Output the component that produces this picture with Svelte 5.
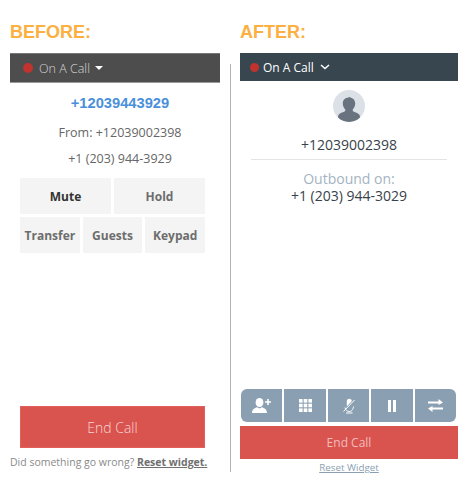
<script lang="ts">
	const rowOne = [
		{ label: 'Mute', active: true },
		{ label: 'Hold', active: false }
	];
	const rowTwo = ['Transfer', 'Guests', 'Keypad'];
	const dots = [0, 1, 2].flatMap((y) => [0, 1, 2].map((x) => ({ x: x * 4.5, y: y * 4.5 })));
</script>

<div class="page">
	<!-- old widget -->
	<section class="before">
		<h2>BEFORE:</h2>
		<div class="bar old-bar">
			<span class="led"></span>
			<span>On A Call</span>
			<span class="caret"></span>
		</div>
		<div class="dialed">+12039443929</div>
		<div class="meta from">From: +12039002398</div>
		<div class="meta line">+1 (203) 944-3929</div>
		<div class="grid">
			<div class="row">
				{#each rowOne as b}
					<div class="cell" class:active={b.active}>{b.label}</div>
				{/each}
			</div>
			<div class="row">
				{#each rowTwo as label}
					<div class="cell">{label}</div>
				{/each}
			</div>
		</div>
		<div class="old-end">End Call</div>
		<div class="old-reset">Did something go wrong? <b>Reset widget.</b></div>
	</section>

	<div class="rule"></div>

	<!-- new widget -->
	<section class="after">
		<h2>AFTER:</h2>
		<div class="bar new-bar">
			<span class="led"></span>
			<span>On A Call</span>
			<svg class="chev" width="10" height="6" viewBox="0 0 10 6">
				<path d="M1 1l4 3.600L9 1" fill="none" stroke="#fff" stroke-width="1.500" />
			</svg>
		</div>
		<div class="avatar">
			<svg width="32" height="32" viewBox="0 0 32 32">
				<circle cx="16" cy="16" r="16" fill="#dbe1e7" />
				<path
					d="M15.500 7.500c-3.300.2-5.700 2.500-5.700 6 0 2.500 1 4.500 2.400 5.800v1.700c-1 1.300-5.300 1.700-6.700 4-.4.700-.5 1.700-.5 2.600A16 16 0 0 0 27 27.600c0-.9-.1-1.900-.5-2.600-1.400-2.300-5.700-2.700-6.700-4v-1.700c1.400-1.300 2.400-3.300 2.400-5.800 0-3.300-2.300-5.500-5-5.900l-.9-.9z"
					fill="#68737f"
				/>
			</svg>
		</div>
		<div class="caller">+12039002398</div>
		<div class="out-label">Outbound on:</div>
		<div class="out-num">+1 (203) 944-3029</div>

		<div class="actions">
			<div class="act">
				<svg width="19" height="15" viewBox="0 0 19 15" fill="#fff">
					<ellipse cx="7.500" cy="4.500" rx="3.900" ry="4.500" />
					<path d="M0 15c0-3.600 2.500-5 5.200-5.700l2.300 1.200 2.300-1.200c2.700.7 5.200 2.100 5.200 5.700z" />
					<path d="M13 3.200h2.200V1h1.600v2.200H19v1.600h-2.200V7h-1.600V4.800H13z" />
				</svg>
			</div>
			<div class="act">
				<svg width="13" height="13" viewBox="0 0 12.500 12.500" fill="#fff">
					{#each dots as d}
						<rect x={d.x} y={d.y} width="3.500" height="3.500" />
					{/each}
				</svg>
			</div>
			<div class="act">
				<svg width="14" height="16" viewBox="0 0 14 16" fill="none" stroke="#fff">
					<path d="M4.800 8.500V3.200a2.500 2.500 0 0 1 5 0v.6L5.500 9.500z" fill="#fff" stroke="none" />
					<path d="M1.500 13.500L12.500 2" stroke="#8a9fb1" stroke-width="2.400" />
					<path d="M1.500 13.500L12.500 2" stroke-width="1" />
					<path d="M3 9.500c.3 2.700 2.300 4 4.300 4s3.800-1.300 4.200-5M4 15h6.500" stroke-width="1" />
				</svg>
			</div>
			<div class="act">
				<svg width="10" height="12" viewBox="0 0 10 12" fill="#fff">
					<rect x="1" y="0" width="3" height="12" />
					<rect x="6" y="0" width="3" height="12" />
				</svg>
			</div>
			<div class="act">
				<svg width="15" height="13" viewBox="0 0 15 13" fill="#fff">
					<path d="M0 2.500h10.500V0L15 3.500 10.500 6V4.500H0z" />
					<path d="M15 8.500H4.500V7L0 9.500 4.500 13v-2.500H15z" />
				</svg>
			</div>
		</div>
		<div class="new-end">End Call</div>
		<div class="new-reset">Reset Widget</div>
	</section>
</div>

<style>
	:global(body) {
		margin: 0;
		background: #fff;
	}
	.page {
		display: flex;
		width: 469px;
		height: 482px;
		overflow: hidden;
		font-family: 'Open Sans', sans-serif;
	}
	section {
		display: flex;
		flex-direction: column;
	}
	.before {
		width: 210px;
		margin-left: 10px;
		padding-bottom: 14px;
	}
	.after {
		width: 218px;
		padding-bottom: 8px;
	}
	.rule {
		width: 1px;
		height: 408px;
		margin: 64px 9px 0 10px;
		background: #b4b4b4;
	}
	h2 {
		margin: 22px 0 11px;
		height: 20px;
		font: bold 18px/20px 'Liberation Sans', sans-serif;
		color: #fbb03f;
	}
	.bar {
		display: flex;
		align-items: center;
		color: #fff;
		font-size: 12px;
	}
	.led {
		width: 10px;
		height: 10px;
		border-radius: 50%;
		background: #c0332e;
		margin-right: 6px;
	}
	.old-bar {
		height: 30px;
		padding-left: 13px;
		background: #4d4d4d;
		color: #d4d4d4;
		font-size: 12.500px;
		font-weight: 300;
		box-sizing: border-box;
		border-top: 1px solid #777;
		border-bottom: 1px solid #999;
	}
	.caret {
		width: 0;
		height: 0;
		margin-left: 5px;
		border: 4px solid transparent;
		border-top: 4px solid #fff;
		border-bottom: 0;
	}
	.dialed {
		margin-top: 10px;
		padding-left: 10px;
		text-align: center;
		font: bold 14.700px/20px 'Liberation Sans', sans-serif;
		color: #4a90d9;
	}
	.meta {
		padding-left: 10px;
		text-align: center;
		font-size: 12.500px;
		line-height: 18px;
		color: #666;
	}
	.from {
		margin-top: 11px;
	}
	.line {
		margin-top: 8px;
	}
	.grid {
		display: flex;
		flex-direction: column;
		gap: 3px;
		width: 185px;
		margin: 10px 0 0 10px;
	}
	.row {
		display: flex;
		gap: 3px;
	}
	.cell {
		flex: 1;
		height: 36px;
		display: flex;
		align-items: center;
		justify-content: center;
		background: #f4f4f4;
		font-size: 12px;
		font-weight: 700;
		color: #6d6d6d;
	}
	.cell.active {
		color: #333;
	}
	.old-end {
		margin: auto 0 0 10px;
		width: 185px;
		height: 42px;
		box-sizing: border-box;
		display: flex;
		align-items: center;
		justify-content: center;
		background: #d9534f;
		border: 1px solid #e2605c;
		color: #f8d5d3;
		font-size: 14px;
		font-weight: 300;
	}
	.old-reset {
		margin-top: 8px;
		height: 12px;
		white-space: nowrap;
		font-size: 10.500px;
		line-height: 12px;
		color: #8a8a8a;
	}
	.old-reset b {
		color: #707070;
		text-decoration: underline;
	}
	.new-bar {
		height: 28px;
		padding-left: 10px;
		background: #38474f;
		font-size: 12px;
	}
	.new-bar .led {
		width: 9px;
		height: 9px;
		margin-right: 4px;
	}
	.chev {
		margin-left: 6px;
	}
	.avatar {
		height: 32px;
		margin-top: 9px;
		display: flex;
		justify-content: center;
	}
	.caller {
		margin: 13px 11px 0;
		padding-bottom: 4px;
		border-bottom: 1px solid #e4e4e4;
		text-align: center;
		font-size: 14px;
		line-height: 20px;
		color: #38424a;
	}
	.out-label {
		margin-top: 10px;
		text-align: center;
		font-size: 14px;
		line-height: 17px;
		color: #a4b3c2;
	}
	.out-num {
		text-align: center;
		font-size: 14px;
		line-height: 17px;
		color: #38424a;
	}
	.actions {
		margin: auto 2px 0 1px;
		display: flex;
		gap: 2px;
		height: 33px;
	}
	.act {
		flex: 1;
		display: flex;
		align-items: center;
		justify-content: center;
		background: #8a9fb1;
	}
	.act:first-child {
		border-radius: 6px 0 0 6px;
	}
	.act:last-child {
		border-radius: 0 6px 6px 0;
	}
	.new-end {
		margin-top: 4px;
		height: 33px;
		display: flex;
		align-items: center;
		justify-content: center;
		background: #d9534f;
		color: #f3bdbb;
		font-size: 12px;
	}
	.new-reset {
		margin-top: 2px;
		height: 13px;
		text-align: center;
		font-size: 9.800px;
		line-height: 13px;
		color: #8a9fb1;
		text-decoration: underline;
	}
</style>
